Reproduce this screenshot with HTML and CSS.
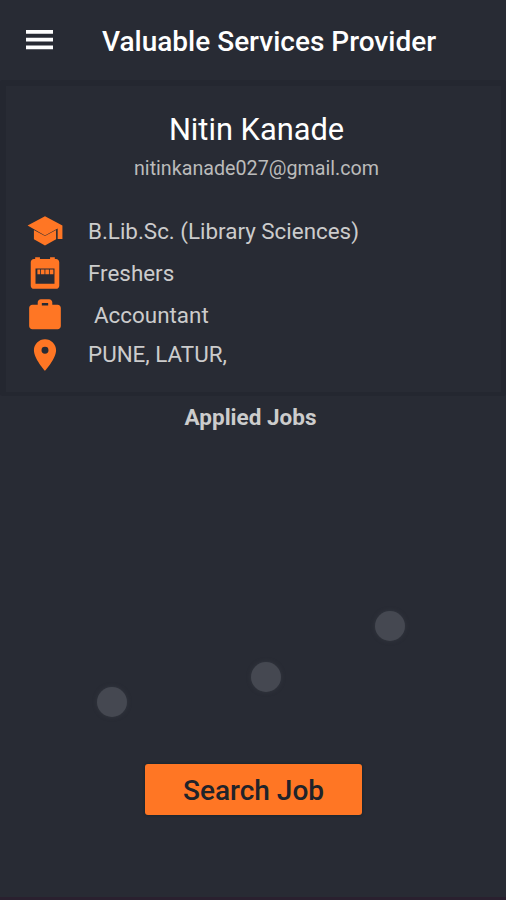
FILE: index.html
```html
<!DOCTYPE html>
<html lang="en">
<head>
<meta charset="utf-8">
<title>Valuable Services Provider</title>
<link rel="stylesheet" href="styles.css">
</head>
<body>
<header class="bar">
  <svg class="menu" viewBox="0 0 27 20"><path d="M0 0h27v3.800H0zM0 7.800h27v3.600H0zM0 15.600h27v3.600H0z"/></svg>
  <h1 class="title">Valuable Services Provider</h1>
</header>
<main class="page">
  <section class="card">
    <h2 class="name">Nitin Kanade</h2>
    <p class="email">nitinkanade027@gmail.com</p>
    <ul class="details">
      <li class="row">
        <svg class="icon" viewBox="0 0 24 24"><path d="M12 2.700 1 8.600l11 6.200 8-4.400v6.600H23V8.600zM5 11.300v5.900l7 3.900 7-3.900v-5.900l-7 3.900z"/></svg>
        <span>B.Lib.Sc. (Library Sciences)</span>
      </li>
      <li class="row">
        <svg class="icon" viewBox="0 0 24 24"><path fill-rule="evenodd" d="M19 3.200h-.8V2h-3v1.200H8.800V2h-3v1.200H5c-1.100 0-2 .9-2 2V20c0 1.100.9 2 2 2h14c1.100 0 2-.9 2-2V5.200c0-1.100-.9-2-2-2zM6 9.200h12v9.600H6zM7.200 9.800h1.700v3H7.200zM9.400 9.800h2.300v3H9.400zM12.200 9.800h2.300v3h-2.300zM15 9.800h2.300v3H15z"/></svg>
        <span>Freshers</span>
      </li>
      <li class="row">
        <svg class="icon" viewBox="0 0 24 24"><path d="M20 5.600h-3.400V4c0-1.110-.89-2-2-2H9.400c-1.110 0-2 .89-2 2v1.600H4c-1.110 0-2 .89-2 2V19c0 1.110.89 2 2 2h16c1.110 0 2-.89 2-2V7.600c0-1.110-.89-2-2-2zm-6 .4h-4V4.400h4z"/></svg>
        <span class="indent">Accountant</span>
      </li>
      <li class="row place">
        <svg class="icon" viewBox="0 0 24 24"><path d="M12 2C8.130 2 5 5.130 5 9c0 5.250 7 13 7 13s7-7.750 7-13c0-3.870-3.130-7-7-7zm0 9.200a2.200 2.200 0 0 1 0-4.400 2.200 2.200 0 0 1 0 4.400z"/></svg>
        <span>PUNE, LATUR,</span>
      </li>
    </ul>
  </section>
  <h3 class="heading">Applied Jobs</h3>
  <div class="loader">
    <i class="dot first"></i><i class="dot second"></i><i class="dot third"></i>
  </div>
  <button class="search">Search Job</button>
</main>
</body>
</html>
```

FILE: styles.css
```css
* { box-sizing: border-box; margin: 0; padding: 0; }
body {
  height: 900px;
  overflow: hidden;
  background: #282b34;
  color: #ccc;
  font-family: Roboto, sans-serif;
  border-bottom: 3px solid #2a202f;
}
.bar { display: flex; align-items: center; height: 80px; padding: 1px 0 0 26px; }
.menu { width: 27px; height: 20px; fill: #fff; margin-top: -1px; }
.title { margin: 2px 0 0 49px; font-size: 28px; font-weight: 500; line-height: 34px; color: #fff; white-space: nowrap; }
.page { display: flex; flex-direction: column; align-items: center; }
.card {
  width: 506px;
  height: 316px;
  border: 4px solid #242730;
  border-width: 6px 5px 4px 6px;
  border-radius: 3px;
  padding-top: 26px;
}
.name { font-size: 30.8px; font-weight: 400; line-height: 36px; color: #fff; text-align: center; padding-left: 6px; }
.email { margin-top: 8px; font-size: 19.7px; line-height: 26px; text-align: center; padding-left: 6px; color: #bbb; }
.details { list-style: none; margin-top: 28px; padding-left: 20px; }
.row { display: flex; align-items: center; height: 42px; font-size: 22.4px; line-height: 28px; white-space: nowrap; }
.row span { margin-bottom: 1px; }
.icon { width: 38px; height: 38px; fill: #ff7624; margin-right: 24px; flex: none; }
.indent { margin-left: 6px; }
.place { height: 38px; }
.place span { margin-bottom: 3px; }
.heading { margin-top: 7px; font-size: 22.5px; line-height: 28px; font-weight: 700; padding-right: 5px; }
.loader { display: flex; gap: 124px; width: 100%; height: 106px; margin-top: 180px; padding-left: 97px; }
.dot { width: 30px; height: 30px; border-radius: 50%; background: #454851; box-shadow: 0 0 4px #353841; }
.first { margin-top: 76px; }
.second { margin-top: 51px; }
.third { margin-left: -30px; }
.search {
  width: 217px;
  height: 51px;
  margin: 47px 0 0 1px;
  border: 0;
  border-radius: 3px;
  background: #ff7624;
  box-shadow: 0 0 2px 1px #1c2730;
  color: #20232a;
  font: 500 28px/34px Roboto, sans-serif;
  padding-top: 3px;
}
```
